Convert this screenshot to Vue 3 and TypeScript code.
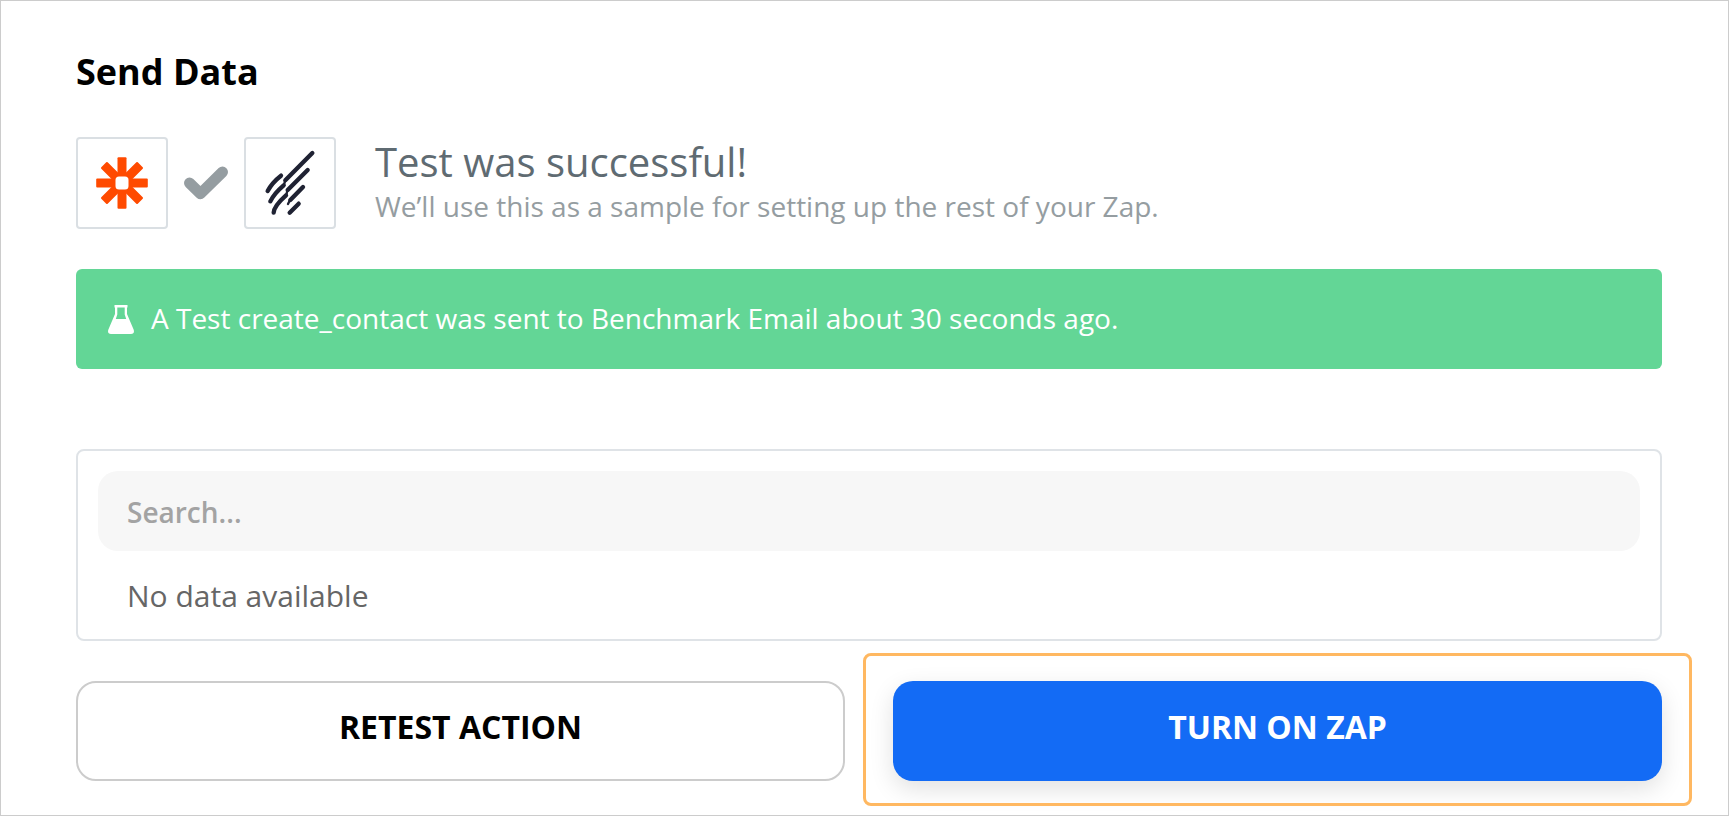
<script setup lang="ts">
import { ref } from 'vue'

const query = ref('')
const spokes = [0, 45, 90, 135]
</script>

<template>
  <main class="page">
    <h1 class="title">Send Data</h1>

    <section class="status">
      <div class="apps">
        <span class="tile">
          <svg viewBox="0 0 88 88" role="img" aria-label="Zapier">
            <rect
              v-for="angle in spokes"
              :key="angle"
              x="18.2"
              y="39.5"
              width="51.6"
              height="9"
              rx="1"
              fill="#ff4a00"
              :transform="`rotate(${angle} 44 44)`"
            />
            <rect x="35.5" y="35.5" width="17" height="17" fill="#ff4a00" />
            <rect x="37.5" y="37.5" width="13" height="13" rx="3.5" fill="#fff" />
          </svg>
        </span>
        <svg class="check" viewBox="0 0 44 34" aria-hidden="true">
          <path d="M5.5 17 L16.5 27.7 L38.5 6" />
        </svg>
        <span class="tile">
          <svg viewBox="558 57 264 264" role="img" aria-label="Benchmark Email">
            <g fill="none" stroke="#1f2233" stroke-width="13" stroke-linecap="round">
              <path d="M757 99 L676 181" />
              <path d="M663 167 Q636 188 623 213" />
              <path d="M671 196 Q642 221 631 244" />
              <path d="M743 150 L683 210" />
              <path d="M678 226 Q642 258 641 278" />
              <path d="M729 201 L691 240" />
              <path d="M716 251 L689 278" />
            </g>
            <path d="M675 182 L672 196 M682 211 L679 226 M690 240 L684 252" fill="none" stroke="#1f2233" stroke-width="7" stroke-linecap="round" />
          </svg>
        </span>
      </div>
      <div class="message">
        <h2>Test was successful!</h2>
        <p>We’ll use this as a sample for setting up the rest of your Zap.</p>
      </div>
    </section>

    <div class="banner" role="status">
      <svg class="flask" viewBox="0 0 26 29" aria-hidden="true">
        <path
          fill="#fff"
          fill-rule="evenodd"
          d="M6.5 0 H19.5 V2.5 H19 V9 L25.6 24.5 Q27 29 23 29 H3 Q-1 29 .4 24.5 L7 9 V2.5 H6.5 Z M9.3 2.5 V9.5 L7.8 14 H18.2 L16.7 9.5 V2.5 Z"
        />
      </svg>
      <span class="banner-text">A Test create_contact was sent to Benchmark Email about 30 seconds ago.</span>
    </div>

    <section class="data">
      <input v-model="query" class="search" type="search" placeholder="Search..." aria-label="Search" />
      <p class="empty">No data available</p>
    </section>

    <div class="actions">
      <button type="button" class="btn secondary">RETEST ACTION</button>
      <div class="spot">
        <button type="button" class="btn primary">TURN ON ZAP</button>
      </div>
    </div>
  </main>
</template>

<style>
body {
  margin: 0;
  background: #fff;
}
</style>

<style scoped>
.page {
  box-sizing: border-box;
  min-height: 100vh;
  padding: 46px 66px 34px 75px;
  border: 1px solid #ccc;
  font-family: "Open Sans", "Noto Sans", sans-serif;
}

.title {
  margin: 0;
  font-size: 36px;
  line-height: 50px;
  font-weight: 700;
  color: #000;
}

.status {
  display: flex;
  align-items: center;
  gap: 39px;
  margin-top: 40px;
}

.apps {
  display: flex;
  align-items: center;
  gap: 16px;
}

.tile {
  box-sizing: border-box;
  width: 92px;
  height: 92px;
  border: 2px solid #dadfe3;
  border-radius: 4px;
}

.tile svg {
  display: block;
  width: 100%;
  height: 100%;
}

.check {
  width: 44px;
  height: 34px;
}

.check path {
  fill: none;
  stroke: #959da1;
  stroke-width: 11;
  stroke-linecap: round;
  stroke-linejoin: round;
}

.message {
  padding-bottom: 2px;
}

.message h2 {
  margin: 0;
  font-size: 40px;
  line-height: 48px;
  font-weight: 400;
  color: #5f6b72;
}

.message p {
  margin: 0;
  font-size: 28px;
  line-height: 40px;
  color: #959da1;
}

.banner {
  display: flex;
  align-items: center;
  gap: 17px;
  box-sizing: border-box;
  min-height: 100px;
  margin-top: 40px;
  padding: 0 32px;
  border-radius: 6px;
  background: #63d696;
  color: #fff;
  font-size: 28px;
  line-height: 40px;
}

.banner-text {
  padding-bottom: 2px;
}

.flask {
  width: 26px;
  height: 29px;
}

.data {
  margin-top: 80px;
  padding: 20px;
  border: 2px solid #dfe3e7;
  border-radius: 8px;
}

.search {
  display: block;
  box-sizing: border-box;
  width: 100%;
  height: 80px;
  padding: 2px 29px 0;
  border: 0;
  border-radius: 20px;
  background: #f7f7f7;
  color: #666;
  font: 600 28px "Open Sans", "Noto Sans", sans-serif;
  appearance: none;
}

.search::placeholder {
  color: #a3a3a3;
  opacity: 1;
}

.empty {
  margin: 25px 29px 3px;
  font-size: 30px;
  line-height: 40px;
  color: #666;
}

.actions {
  display: grid;
  grid-template-columns: 1fr 1fr;
  gap: 48px;
  margin-top: 40px;
}

.btn {
  box-sizing: border-box;
  width: 100%;
  height: 100px;
  padding: 0 20px 10px;
  border-radius: 20px;
  font: 700 32px "Open Sans", "Noto Sans", sans-serif;
  cursor: pointer;
}

.secondary {
  border: 2px solid #ccc;
  background: #fff;
  color: #000;
}

.spot {
  position: relative;
}

.spot::after {
  content: "";
  position: absolute;
  inset: -28px -30px -25px;
  border: 3px solid #ffb861;
  border-radius: 8px;
  pointer-events: none;
}

.primary {
  display: block;
  border: 0;
  background: #136bf5;
  color: #fff;
  box-shadow: 0 8px 24px rgba(0, 0, 0, 0.12);
}
</style>
